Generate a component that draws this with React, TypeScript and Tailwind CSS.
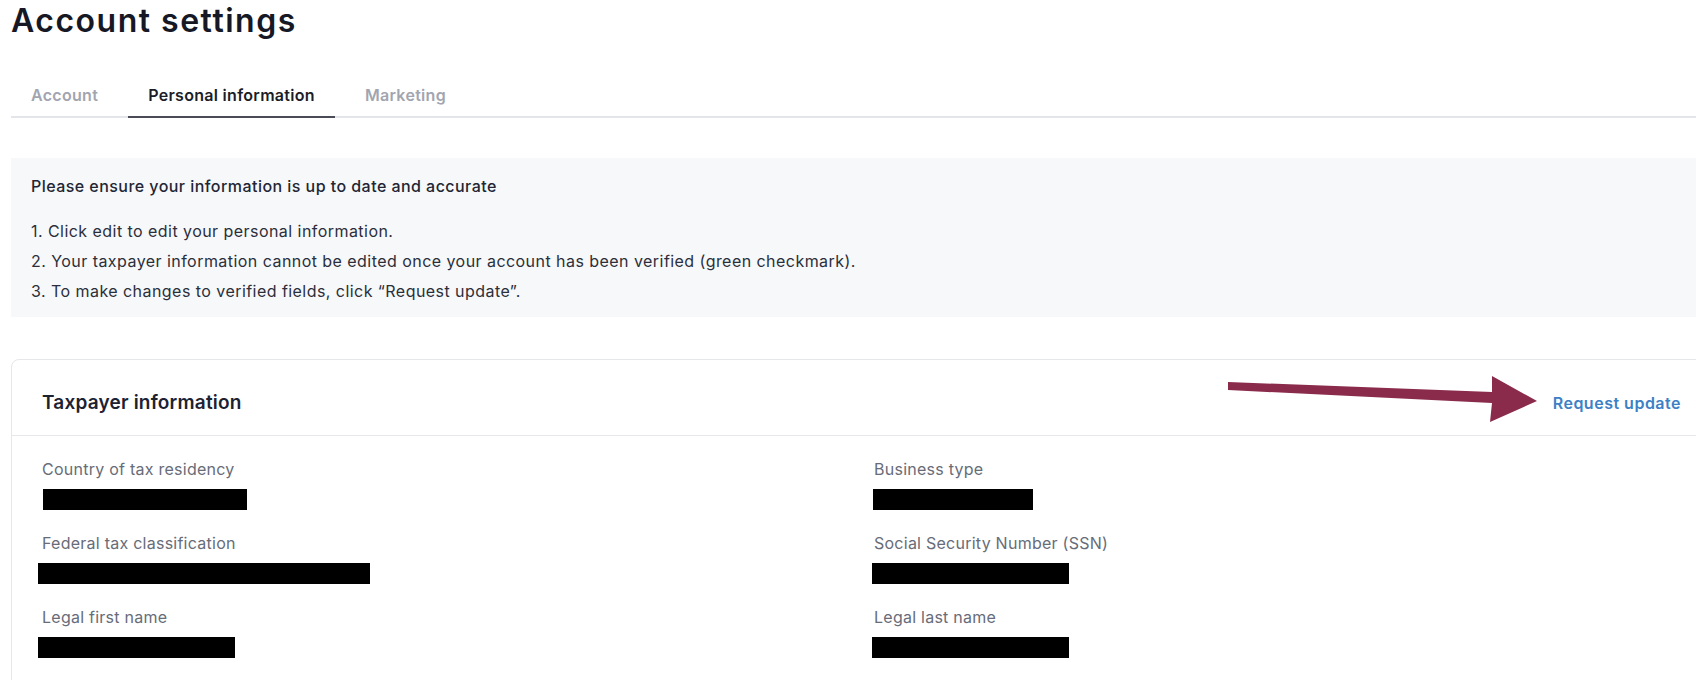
import React from "react";

type Field = {
  label: string;
  barClass: string;
};

const leftFields: Field[] = [
  { label: "Country of tax residency", barClass: "ml-px w-[204px]" },
  { label: "Federal tax classification", barClass: "-ml-[4px] w-[332px]" },
  { label: "Legal first name", barClass: "-ml-[4px] w-[197px]" },
];

const rightFields: Field[] = [
  { label: "Business type", barClass: "-ml-px w-[160px]" },
  { label: "Social Security Number (SSN)", barClass: "-ml-[2px] w-[197px]" },
  { label: "Legal last name", barClass: "-ml-[2px] w-[197px]" },
];

function FieldColumn({ fields }: { fields: Field[] }) {
  return (
    <div className="flex flex-col gap-[22px]">
      {fields.map((f) => (
        <div key={f.label} className="flex flex-col">
          <div className="text-[16px] leading-[22px] tracking-[0.25px] text-[#676c78]">{f.label}</div>
          <div className={`mt-[9px] h-[21px] bg-black ${f.barClass}`} />
        </div>
      ))}
    </div>
  );
}

const tabs = [
  { label: "Account", active: false },
  { label: "Personal information", active: true },
  { label: "Marketing", active: false },
];

export default function App() {
  return (
    <div
      className="relative h-[680px] w-[1696px] overflow-hidden bg-white"
      style={{ fontFamily: "Inter, 'Noto Sans', sans-serif" }}
    >
      <div className="w-[1712px] pl-[11px]">
        <h1 className="text-[32px] font-semibold leading-[42px] tracking-[1.5px] text-[#161925]">
          Account settings
        </h1>

        {/* tab strip */}
        <div className="mt-[33px] flex gap-[10px] border-b-2 border-[#e4e5ea]">
          {tabs.map((t) => (
            <div
              key={t.label}
              className={
                t.active
                  ? "-mb-[2px] border-b-2 border-[#4a4b55] px-5 pb-[11px] pt-[10px] text-[16px] font-semibold leading-[20px] tracking-[0.3px] text-[#1b1d28]"
                  : "-mb-[2px] border-b-2 border-transparent px-5 pb-[11px] pt-[10px] text-[16px] font-semibold leading-[20px] tracking-[0.3px] text-[#a2a5b0]"
              }
            >
              {t.label}
            </div>
          ))}
        </div>

        {/* notice */}
        <div className="mt-[40px] h-[159px] bg-[#f7f8fa] pl-5 pt-[18px]">
          <div className="text-[16px] font-medium leading-[20px] tracking-[0.45px] text-[#222634]">
            Please ensure your information is up to date and accurate
          </div>
          <ol className="mt-[20px] text-[16px] leading-[30px] tracking-[0.45px] text-[#2b2f3b]">
            <li>1. Click edit to edit your personal information.</li>
            <li>2. Your taxpayer information cannot be edited once your account has been verified (green checkmark).</li>
            <li>3. To make changes to verified fields, click “Request update”.</li>
          </ol>
        </div>

        {/* taxpayer card */}
        <div className="mt-[42px] rounded-lg border border-[#e6e7eb]">
          <div className="flex h-[76px] items-center justify-between border-b border-[#e6e7eb] pl-[30px] pr-[30px] pt-[10px]">
            <div className="text-[19px] font-semibold leading-[24px] tracking-[0.2px] text-[#1c2232]">Taxpayer information</div>
            <div className="text-[16px] font-semibold leading-[22px] tracking-[0.5px] text-[#3c80c6]">Request update</div>
          </div>
          <div className="grid grid-cols-[832px_1fr] pl-[30px] pt-[22px] pb-10">
            <FieldColumn fields={leftFields} />
            <FieldColumn fields={rightFields} />
          </div>
        </div>
      </div>

      {/* annotation arrow pointing at the link */}
      <svg
        className="pointer-events-none absolute left-0 top-0"
        width={1696}
        height={680}
        viewBox="0 0 1696 680"
      >
        <polygon
          points="1228,382 1492,392 1492,376 1537,401 1490,422 1492,403 1228,390"
          fill="#8a2b4b"
        />
      </svg>
    </div>
  );
}
